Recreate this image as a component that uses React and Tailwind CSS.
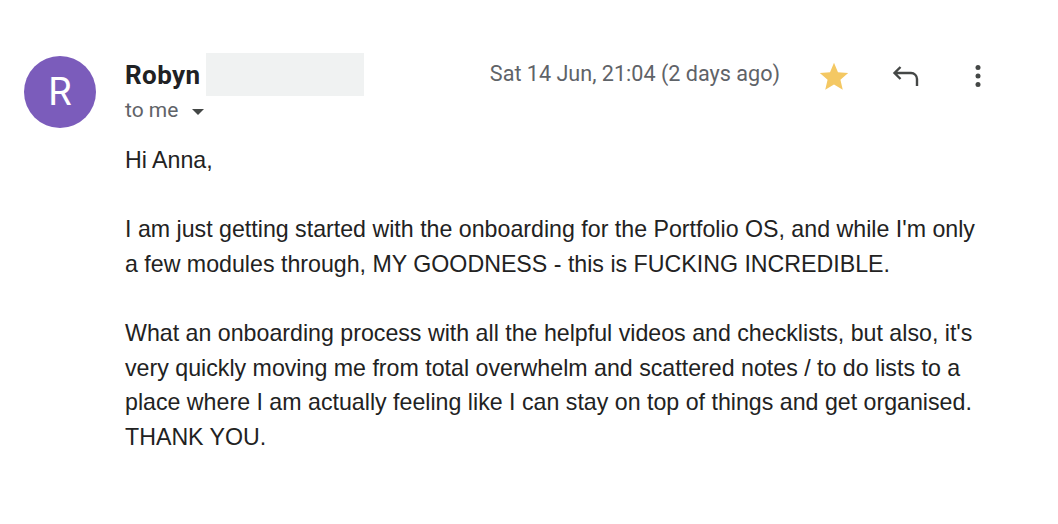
export default function App() {
  const roboto = { fontFamily: "Roboto, 'Liberation Sans', sans-serif" };
  return (
    <div className="w-[1058px] h-[524px] bg-white overflow-hidden">
      <div className="flex pl-[24px] pt-[53px]">
        <div className="mt-[3px] w-[72px] h-[72px] rounded-full bg-[#7b5cbb] flex items-center justify-center text-white text-[38px] shrink-0" style={roboto}>
          R
        </div>
        <div className="ml-[29px] w-[862px]">
          <div className="flex items-center h-[43px]" style={roboto}>
            <span className="font-bold text-[26px] tracking-[0.4px] text-[#202124] leading-none">Robyn</span>
            <span className="ml-[6px] w-[158px] h-[43px] bg-[#f0f2f2]"></span>
            <span className="ml-auto text-[21.6px] text-[#5f6368] leading-none mt-[-1px]">Sat 14 Jun, 21:04 (2 days ago)</span>
            <svg width="34" height="34" viewBox="0 0 24 24" className="ml-[37px] mt-[5px] shrink-0">
              <path d="M12 17.27L18.18 21l-1.64-7.03L22 9.24l-7.19-.61L12 2 9.19 8.63 2 9.24l5.46 4.73L5.82 21z" fill="#f4c863" />
            </svg>
            <svg width="28" height="22" viewBox="0 0 28 22" className="ml-[41px] mt-[2px] shrink-0">
              <path d="M8.5 2 L2.5 8 L8.5 14 M2.5 8 H19 a6 6 0 0 1 6 6 V21" fill="none" stroke="#444746" strokeWidth="2.4" />
            </svg>
            <svg width="10" height="24" viewBox="0 0 10 24" className="ml-[53px] mr-[4px] mt-[2px] shrink-0">
              <circle cx="5" cy="3.5" r="2.5" fill="#444746" />
              <circle cx="5" cy="12" r="2.5" fill="#444746" />
              <circle cx="5" cy="20.5" r="2.5" fill="#444746" />
            </svg>
          </div>
          <div className="flex items-center h-[24px] mt-[3px] text-[21px] text-[#5f6368]" style={roboto}>
            <span>to me</span>
            <svg width="12" height="6" viewBox="0 0 12 6" className="ml-[14px] mt-[2px]">
              <path d="M0 0 L12 0 L6 6 Z" fill="#444746" />
            </svg>
          </div>
          <div className="mt-[20px] text-[23.2px] leading-[34.6px] text-[#222222]" style={{ fontFamily: "'Liberation Sans', Arial, sans-serif" }}>
            <div>Hi Anna,</div>
            <div><br /></div>
            <div>I am just getting started with the onboarding for the Portfolio OS, and while I'm only a few modules through, MY GOODNESS - this is FUCKING INCREDIBLE.</div>
            <div><br /></div>
            <div>What an onboarding process with all the helpful videos and checklists, but also, it's very quickly moving me from total overwhelm and scattered notes / to do lists to a place where I am actually feeling like I can stay on top of things and get organised. THANK YOU.</div>
          </div>
        </div>
      </div>
    </div>
  );
}
